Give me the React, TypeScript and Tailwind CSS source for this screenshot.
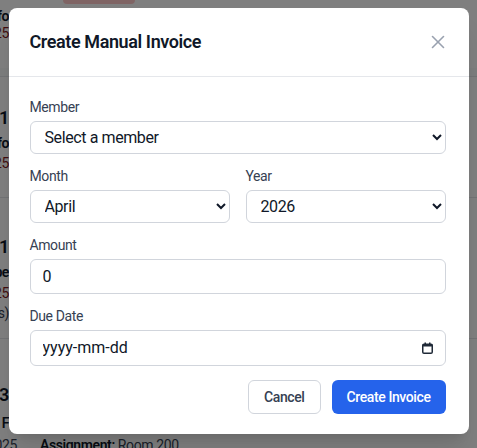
import { X } from "lucide-react";

const labelClass = "mb-1 block h-5 text-sm leading-5 font-normal text-gray-700";
const selectClass =
  "block h-[33px] w-full rounded-md border border-gray-300 bg-white pl-2.5 pr-1 text-base text-gray-900 outline-none";
const inputClass =
  "block h-[35px] w-full rounded-md border border-gray-300 bg-white px-3 text-base text-gray-900 outline-none";
const edgeRow = "flex w-[9px] justify-end whitespace-nowrap";

const MONTHS = [
  "January",
  "February",
  "March",
  "April",
  "May",
  "June",
  "July",
  "August",
  "September",
  "October",
  "November",
  "December",
];

// Invoice list behind the overlay; only the left edge peeks out.
function BackgroundPage() {
  return (
    <div className="h-[448px] w-[477px] overflow-hidden bg-white text-sm">
      <div className="ml-[63px] h-1 w-[72px] rounded-b bg-red-200" />

      <div className={`${edgeRow} mt-1 h-4 leading-4 font-semibold text-gray-900`}>
        Info
      </div>
      <div className={`${edgeRow} mt-px h-4 leading-4 text-red-900`}>2025</div>
      <div className="mt-[27px] h-[9px] border-b border-gray-200 bg-gray-50" />

      <div className={`${edgeRow} mt-[27px] h-7 text-lg leading-7 font-semibold text-gray-900`}>
        INV-11
      </div>
      <div className={`${edgeRow} mt-[3px] h-4 leading-4 font-semibold text-gray-900`}>
        Info
      </div>
      <div className={`${edgeRow} mt-1 h-4 leading-4 text-red-900`}>2025</div>
      <div className="mt-[26px] h-px bg-gray-200" />

      <div className={`${edgeRow} mt-[35px] h-7 text-lg leading-7 font-semibold text-gray-900`}>
        INV-11
      </div>
      <div className={`${edgeRow} mt-[3px] h-4 leading-4 font-semibold text-gray-900`}>
        Type
      </div>
      <div className={`${edgeRow} mt-[5px] h-4 leading-4 text-red-900`}>2025</div>
      <div className={`${edgeRow} mt-1 h-4 leading-4 text-gray-700`}>(Rates)</div>
      <div className="mt-[17px] h-px bg-gray-200" />

      <div className={`${edgeRow} mt-[42px] h-7 text-lg leading-7 font-semibold text-gray-900`}>
        INV-3
      </div>
      <div className={`${edgeRow} mt-[6px] h-4 leading-4 font-semibold text-gray-900`}>
        Room F
      </div>
      <div className="mt-[6px] flex h-4 items-center gap-[23px] leading-4 whitespace-nowrap">
        <div className="flex w-[17px] justify-end text-gray-700">2025</div>
        <span className="text-gray-700">
          <span className="font-semibold text-gray-900">Assignment:</span> Room
          200
        </span>
      </div>
    </div>
  );
}

function CalendarGlyph() {
  return (
    <svg width="11" height="12" viewBox="0 0 11 12" aria-hidden="true">
      <rect
        x="0.75"
        y="2.25"
        width="9.5"
        height="9"
        rx="1.25"
        fill="none"
        stroke="#1f2937"
        strokeWidth="1.5"
      />
      <rect x="0.5" y="2" width="10" height="2.5" rx="1" fill="#1f2937" />
      <rect x="2.5" y="0.5" width="1.5" height="2" fill="#1f2937" />
      <rect x="7" y="0.5" width="1.5" height="2" fill="#1f2937" />
    </svg>
  );
}

export default function App() {
  return (
    <div
      className="relative h-[448px] w-[477px] overflow-hidden tracking-tight"
      style={{ fontFamily: "Roboto, 'Noto Sans', sans-serif" }}
    >
      <BackgroundPage />

      <div className="absolute inset-0 flex items-start justify-center bg-black/50 pt-2">
        <div className="w-[460px] rounded-lg bg-white shadow-xl">
          <div className="flex items-center justify-between border-b border-gray-200 pt-5 pb-5 pl-[21px] pr-5">
            <h3 className="text-lg leading-7 font-semibold text-gray-900">
              Create Manual Invoice
            </h3>
            <button type="button" className="text-gray-400">
              <X size={22} strokeWidth={1.75} />
            </button>
          </div>

          <form className="pt-5 pb-5 pl-[21px] pr-[23px]">
            <div className="space-y-3">
              <div>
                <label className={labelClass}>Member</label>
                <select
                  className={`${selectClass} border-[#3b82f6]`}
                  defaultValue=""
                >
                  <option value="">Select a member</option>
                  <option value="1">Room 200</option>
                </select>
              </div>

              <div className="grid grid-cols-2 gap-4">
                <div>
                  <label className={labelClass}>Month</label>
                  <select className={selectClass} defaultValue="April">
                    {MONTHS.map((m) => (
                      <option key={m} value={m}>
                        {m}
                      </option>
                    ))}
                  </select>
                </div>
                <div>
                  <label className={labelClass}>Year</label>
                  <select className={selectClass} defaultValue="2026">
                    <option value="2025">2025</option>
                    <option value="2026">2026</option>
                    <option value="2027">2027</option>
                  </select>
                </div>
              </div>

              <div>
                <label className={labelClass}>Amount</label>
                <input type="number" defaultValue={0} className={inputClass} />
              </div>

              <div>
                <label className={labelClass}>Due Date</label>
                <div className="flex h-[36px] w-full items-center rounded-md border border-gray-300 bg-white px-3">
                  <input
                    type="text"
                    placeholder="yyyy-mm-dd"
                    className="min-w-0 flex-1 bg-transparent text-base tracking-normal text-gray-900 outline-none placeholder:text-gray-900"
                  />
                  <CalendarGlyph />
                </div>
              </div>
            </div>

            <div className="mt-[14px] flex justify-end gap-[11px]">
              <button
                type="button"
                className="h-[34px] rounded-md border border-gray-300 bg-white px-[15px] text-sm font-medium text-gray-700"
              >
                Cancel
              </button>
              <button
                type="submit"
                className="h-[34px] rounded-md bg-[#2563eb] px-[15px] text-sm font-medium text-white"
              >
                Create Invoice
              </button>
            </div>
          </form>
        </div>
      </div>
    </div>
  );
}
